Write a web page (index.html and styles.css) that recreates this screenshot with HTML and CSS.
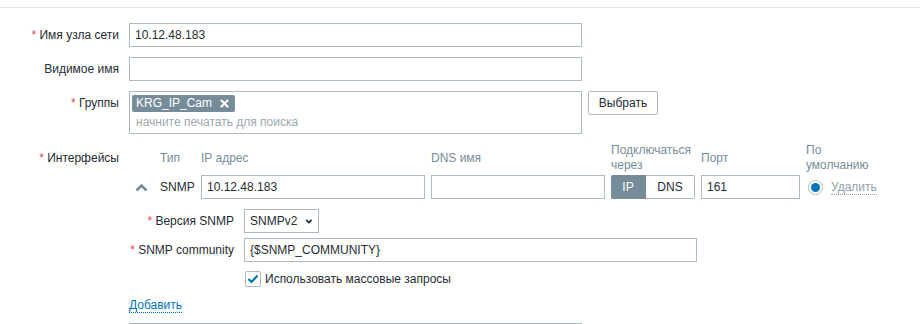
FILE: index.html
```html
<!DOCTYPE html>
<html lang="ru">
<head>
  <meta charset="UTF-8" />
  <title>Узел сети</title>
<link rel="stylesheet" href="styles.css">
</head>
<body>
<div class="topline"></div>

<div class="form">
  <label class="form-label"><span class="req">*</span> Имя узла сети</label>
  <div class="form-field">
    <input class="text wide" type="text" value="10.12.48.183">
  </div>

  <label class="form-label">Видимое имя</label>
  <div class="form-field">
    <input class="text wide" type="text" value="">
  </div>

  <label class="form-label"><span class="req">*</span> Группы</label>
  <div class="form-field groups">
    <div class="multiselect">
      <span class="tag">KRG_IP_Cam
        <svg class="tag-x" width="9" height="9" viewBox="0 0 9 9"><path d="M1.5 1.5 L7.5 7.5 M7.5 1.5 L1.5 7.5" stroke="#fff" stroke-width="2.2" stroke-linecap="round"/></svg>
      </span>
      <div class="placeholder">начните печатать для поиска</div>
    </div>
    <button class="btn">Выбрать</button>
  </div>

  <label class="form-label iface-label"><span class="req">*</span> Интерфейсы</label>
  <div class="form-field">
    <div class="iface">
      <div class="hd"></div>
      <div class="hd">Тип</div>
      <div class="hd">IP адрес</div>
      <div class="hd">DNS имя</div>
      <div class="hd">Подключаться<br>через</div>
      <div class="hd">Порт</div>
      <div class="hd">По<br>умолчанию</div>

      <div class="cell toggle-arrow">
        <svg width="13" height="9" viewBox="0 0 13 9"><polyline points="1.5,7.5 6.5,2.5 11.5,7.5" fill="none" stroke="#768d99" stroke-width="2.6"/></svg>
      </div>
      <div class="cell">SNMP</div>
      <div class="cell"><input class="text fill" type="text" value="10.12.48.183"></div>
      <div class="cell"><input class="text fill" type="text" value=""></div>
      <div class="cell">
        <div class="radio-btns">
          <span class="seg on">IP</span><span class="seg">DNS</span>
        </div>
      </div>
      <div class="cell"><input class="text fill" type="text" value="161"></div>
      <div class="cell default">
        <span class="radio"><span class="dot"></span></span>
        <a class="link-alt">Удалить</a>
      </div>
    </div>

    <div class="details">
      <label class="sub-label"><span class="req">*</span> Версия SNMP</label>
      <div class="sub-field">
        <div class="select">SNMPv2
          <svg width="10" height="7" viewBox="0 0 10 7"><polyline points="1.5,1.5 5,5 8.5,1.5" fill="none" stroke="#1f2c33" stroke-width="2.2"/></svg>
        </div>
      </div>

      <label class="sub-label"><span class="req">*</span> SNMP community</label>
      <div class="sub-field">
        <input class="text community" type="text" value="{$SNMP_COMMUNITY}">
      </div>

      <div class="sub-label"></div>
      <div class="sub-field check-row">
        <span class="checkbox">
          <svg width="12" height="10" viewBox="0 0 12 10"><polyline points="1.5,5 4.5,8 10.5,1.5" fill="none" stroke="#0275b8" stroke-width="2.2"/></svg>
        </span>
        Использовать массовые запросы
      </div>
    </div>

    <a class="link add">Добавить</a>
  </div>

  <div class="form-label"></div>
  <div class="form-field">
    <div class="next-box"></div>
  </div>
</div>
</body>
</html>
```

FILE: styles.css
```css
html {
  overflow: hidden;
}

body {
  margin: 0;
  height: 324px;
  overflow: hidden;
  background: #fff;
  font-family: "Liberation Sans", Arial, sans-serif;
  font-size: 12px;
  color: #1f2c33;
}

.topline {
  height: 7px;
  border-bottom: 1px solid #e3e6e8;
}

.form {
  display: grid;
  grid-template-columns: 119px 1fr;
  column-gap: 10px;
  row-gap: 10px;
  padding-top: 15px;
}

.form-label {
  text-align: right;
  line-height: 24px;
  white-space: nowrap;
}

.iface-label {
  padding-top: 2px;
}

.req {
  color: #e54251;
}

.text {
  box-sizing: border-box;
  height: 24px;
  border: 1px solid #acbbc2;
  border-radius: 0;
  padding: 0 5px;
  font-family: inherit;
  font-size: 12px;
  color: #1f2c33;
  background: #fff;
  outline: none;
  margin: 0;
}

.wide {
  width: 453px;
  display: block;
}

.fill {
  width: 100%;
  display: block;
}

/* groups multiselect */
.groups {
  display: flex;
  align-items: flex-start;
  gap: 6px;
}

.multiselect {
  box-sizing: border-box;
  width: 453px;
  height: 43px;
  border: 1px solid #acbbc2;
  padding: 3px 2px;
}

.tag {
  display: inline-flex;
  align-items: center;
  gap: 8px;
  height: 17px;
  padding: 0 6px 0 4px;
  background: #768d99;
  color: #fff;
  border-radius: 2px;
  line-height: 17px;
}

.placeholder {
  color: #9aa9b1;
  padding-left: 4px;
  line-height: 18px;
  margin-top: 1px;
}

.btn {
  box-sizing: border-box;
  height: 24px;
  width: 70px;
  border: 1px solid #acbbc2;
  border-radius: 2px;
  background: #fff;
  font-family: inherit;
  font-size: 12px;
  color: #1f2c33;
  padding: 0;
}

/* interfaces table */
.iface {
  display: grid;
  grid-template-columns: 25px 35px 224px 174px 84px 99px auto;
  column-gap: 6px;
  grid-template-rows: 28px 24px;
  row-gap: 3px;
  align-items: center;
}

.hd {
  color: #768d99;
  line-height: 15px;
}

.cell {
  height: 24px;
  line-height: 24px;
  white-space: nowrap;
}

.toggle-arrow {
  display: flex;
  align-items: center;
  padding-left: 6px;
}

.radio-btns {
  display: flex;
  height: 24px;
  box-sizing: border-box;
}

.seg {
  box-sizing: border-box;
  height: 24px;
  line-height: 22px;
  text-align: center;
  border: 1px solid #acbbc2;
  border-left: none;
  border-radius: 0 2px 2px 0;
  width: 49px;
}

.seg.on {
  width: 35px;
  background: #768d99;
  border-color: #768d99;
  color: #fff;
  border-radius: 2px 0 0 2px;
}

.default {
  display: flex;
  align-items: center;
  gap: 8px;
  padding-left: 2px;
}

.radio {
  box-sizing: border-box;
  width: 15px;
  height: 15px;
  border: 1px solid #acbbc2;
  border-radius: 50%;
  display: flex;
  align-items: center;
  justify-content: center;
}

.dot {
  width: 9px;
  height: 9px;
  border-radius: 50%;
  background: #0275b8;
}

.link-alt {
  color: #8fa1ab;
  line-height: 14px;
  border-bottom: 1px dotted #8fa1ab;
}

/* interface details */
.details {
  display: grid;
  grid-template-columns: 105px 1fr;
  column-gap: 10px;
  row-gap: 5px;
  margin-top: 10px;
}

.sub-label {
  text-align: right;
  line-height: 24px;
  white-space: nowrap;
}

.sub-field {
  min-height: 24px;
}

.select {
  box-sizing: border-box;
  display: inline-flex;
  align-items: center;
  gap: 8px;
  height: 24px;
  width: 75px;
  border: 1px solid #acbbc2;
  padding: 0 5px;
}

.community {
  width: 453px;
  display: block;
}

.check-row {
  display: flex;
  align-items: center;
  gap: 4px;
  height: 24px;
  padding-left: 1px;
}

.checkbox {
  box-sizing: border-box;
  width: 16px;
  height: 16px;
  border: 1px solid #acbbc2;
  border-radius: 2px;
  display: flex;
  align-items: center;
  justify-content: center;
}

.link {
  display: inline-block;
  color: #0275b8;
  line-height: 14px;
  border-bottom: 1px dotted #0275b8;
  margin-top: 7px;
}

.next-box {
  width: 453px;
  height: 2px;
  box-sizing: border-box;
  border-top: 1px solid #acbbc2;
}
```
